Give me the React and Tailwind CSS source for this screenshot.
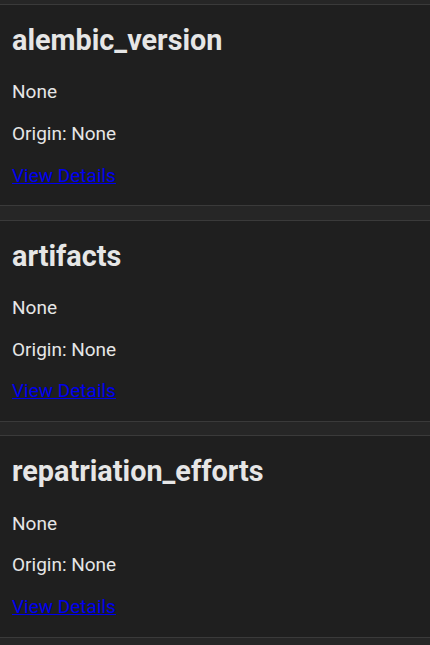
import React from "react";

const items = ["alembic_version", "artifacts", "repatriation_efforts"];

function Card({ name }) {
  return (
    <div className="bg-[#1f1f1f] border-y border-[#3a3a3a] px-3 pt-4 pb-[17px] mb-[13.5px]">
      <h2 className="text-[28.8px] font-bold leading-[38.4px] text-[#e6e6e6] mb-[20px]">{name}</h2>
      <p className="text-[19px] leading-[25.6px] text-[#e6e6e6]">None</p>
      <p className="text-[19px] leading-[25.6px] text-[#e6e6e6] mt-4">Origin: None</p>
      <p className="text-[19px] leading-[25.6px] mt-4">
        <a href="#" className="text-[#0000ee] underline">View Details</a>
      </p>
    </div>
  );
}

export default function App() {
  return (
    <div
      className="min-h-[645px] bg-[#262626] pt-1"
      style={{ fontFamily: "Roboto, 'Liberation Sans', sans-serif" }}
    >
      {items.map((n) => (
        <Card key={n} name={n} />
      ))}
    </div>
  );
}
